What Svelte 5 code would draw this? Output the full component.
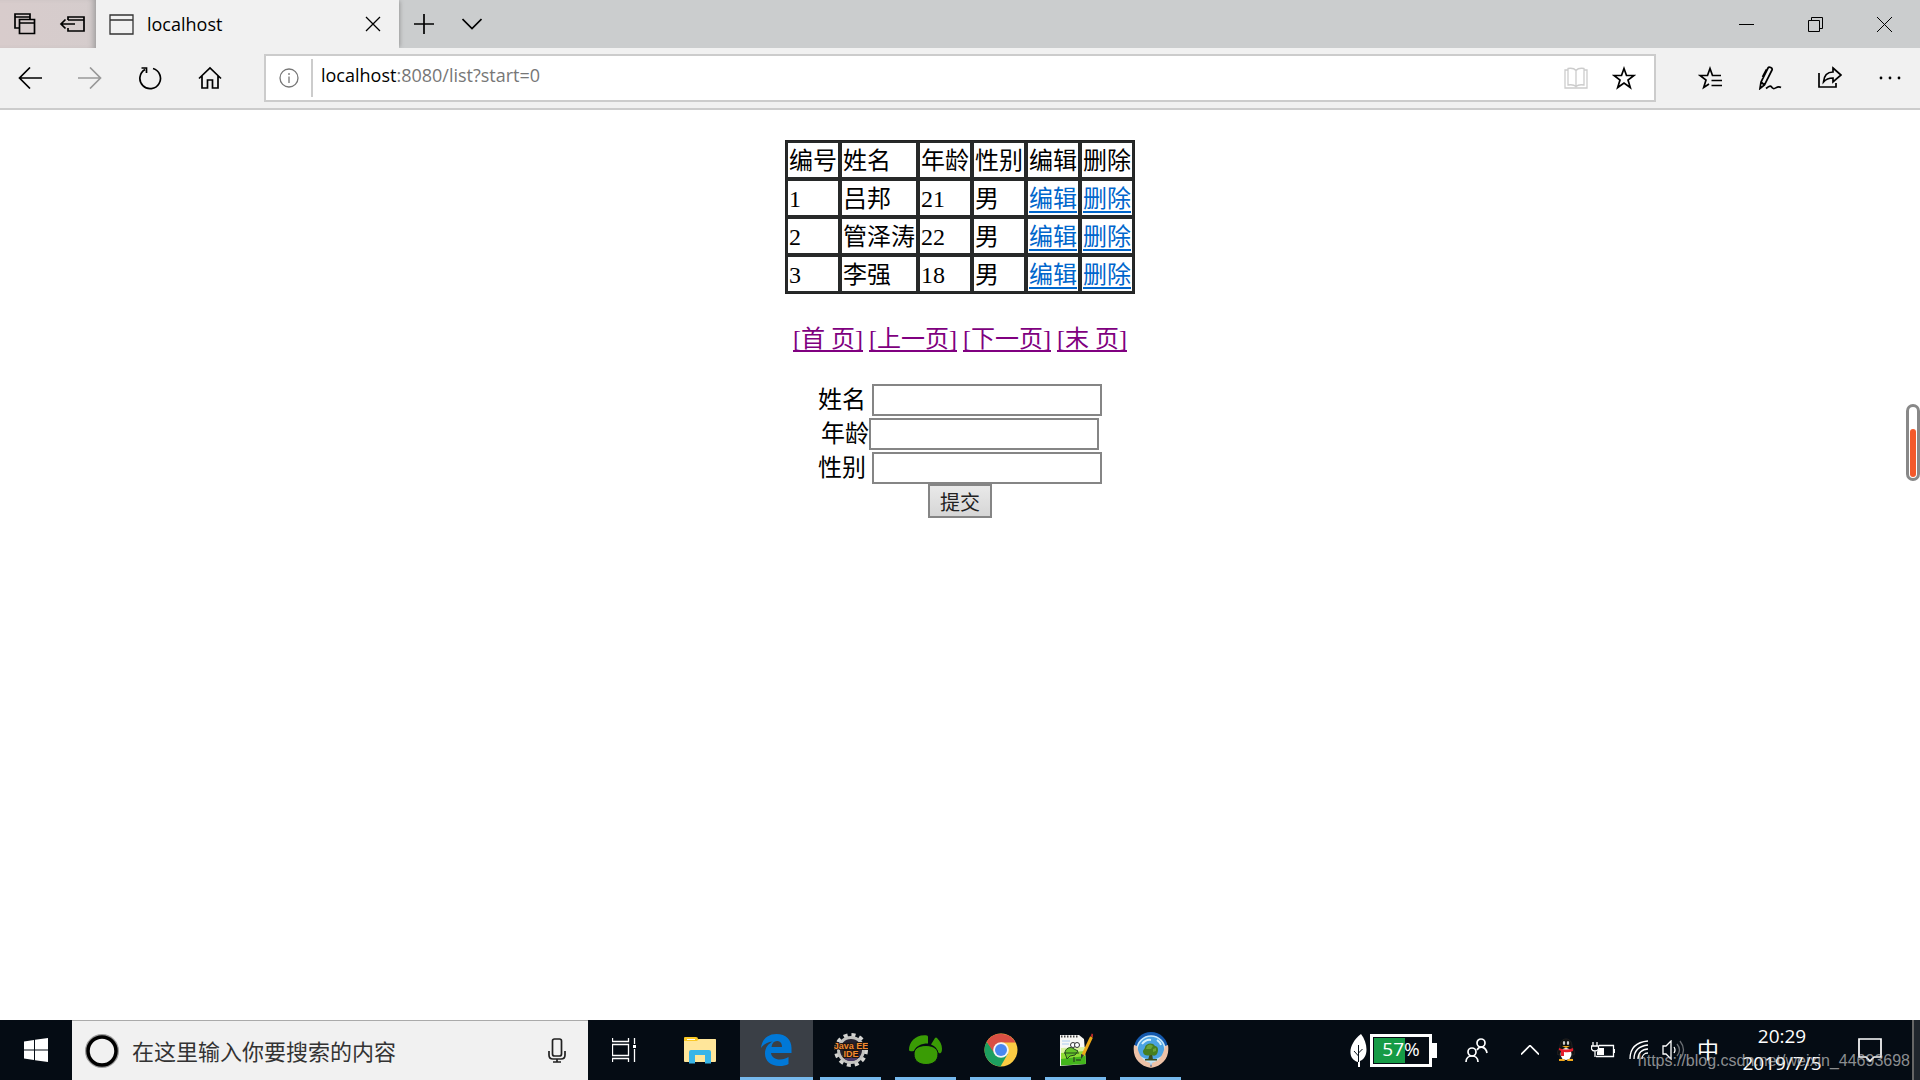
<script lang="ts">
  type Person = { id: number; name: string; age: number; sex: string }

  const people: Person[] = [
    { id: 1, name: '吕邦', age: 21, sex: '男' },
    { id: 2, name: '管泽涛', age: 22, sex: '男' },
    { id: 3, name: '李强', age: 18, sex: '男' },
  ]
  const columns = ['编号', '姓名', '年龄', '性别', '编辑', '删除']
  const pages = ['[首 页]', '[上一页]', '[下一页]', '[末 页]']

  let name = $state('')
  let age = $state('')
  let sex = $state('')
  let query = $state('')
  let battery = $state(57)
</script>

<div class="screen">
  <header>
    <div class="tabs">
      <div class="aside">
        <button type="button" aria-label="Tabs set aside">
          <svg width="24" height="24" viewBox="0 0 24 24" class="line bold" aria-hidden="true">
            <path d="M7 16H3V2h15v5M3 5h15M7.500 7.500h15v14h-15zM7.500 11h15" />
          </svg>
        </button>
        <button type="button" aria-label="Set tabs aside">
          <svg width="26" height="20" viewBox="0 0 26 20" class="line bold" aria-hidden="true">
            <path d="M9 6V3h16v14H9v-3M9 6h16M2 10h14M6.500 5.500 2 10l4.500 4.500" />
          </svg>
        </button>
      </div>
      <div class="tab">
        <svg width="25" height="21" viewBox="0 0 25 21" class="line page-icon" aria-hidden="true">
          <path d="M1 1h23v19H1zM1 6h23" />
        </svg>
        <span>localhost</span>
        <button type="button" aria-label="Close tab">
          <svg width="16" height="16" viewBox="0 0 16 16" class="line" aria-hidden="true">
            <path d="m1 1 14 14M15 1 1 15" />
          </svg>
        </button>
      </div>
      <button type="button" class="tab-action" aria-label="New tab">
        <svg width="20" height="20" viewBox="0 0 20 20" class="line bold" aria-hidden="true">
          <path d="M10 0v20M0 10h20" />
        </svg>
      </button>
      <button type="button" class="tab-action" aria-label="Tab previews">
        <svg width="20" height="12" viewBox="0 0 20 12" class="line bold" aria-hidden="true">
          <path d="m.5 1 9.500 9.500L19.500 1" />
        </svg>
      </button>
      <div class="window">
        <button type="button" aria-label="Minimize">
          <svg width="15" height="15" viewBox="0 0 15 15" class="line thin" aria-hidden="true"><path d="M0 7.500h15" /></svg>
        </button>
        <button type="button" aria-label="Restore">
          <svg width="15" height="15" viewBox="0 0 15 15" class="line thin" aria-hidden="true">
            <path d="M.5 3.500h11v11H.5zM3.500 3.500v-3h11v11h-3" />
          </svg>
        </button>
        <button type="button" aria-label="Close">
          <svg width="15" height="15" viewBox="0 0 15 15" class="line thin" aria-hidden="true"><path d="m0 0 15 15M15 0 0 15" /></svg>
        </button>
      </div>
    </div>

    <div class="toolbar">
      <nav class="tools">
        <button type="button" aria-label="Back">
          <svg width="24" height="22" viewBox="0 0 24 22" class="line bold" aria-hidden="true"><path d="M12 .5 1.500 11 12 21.500M1.500 11H24" /></svg>
        </button>
        <button type="button" aria-label="Forward" disabled>
          <svg width="24" height="22" viewBox="0 0 24 22" class="line bold" aria-hidden="true"><path d="M12 .5 22.500 11 12 21.500M22.500 11H0" /></svg>
        </button>
        <button type="button" aria-label="Refresh">
          <svg width="24" height="24" viewBox="0 0 24 24" class="line bold" aria-hidden="true">
            <path d="M15 2.500A10.300 10.300 0 1 1 7 3.500M3.500 2H8.500v5" />
          </svg>
        </button>
        <button type="button" aria-label="Home">
          <svg width="24" height="24" viewBox="0 0 24 24" class="line bold" aria-hidden="true">
            <path d="M1 12.500 12 2l11 10.500M4 10v12h5.500v-8h5v8H20V10" />
          </svg>
        </button>
      </nav>
      <div class="address">
        <svg width="20" height="20" viewBox="0 0 20 20" class="line info" aria-hidden="true">
          <circle cx="10" cy="10" r="9" /><path d="M10 8.500V15M10 5v2" />
        </svg>
        <a class="url" href="#list"><b>localhost</b>:8080/list?start=0</a>
        <button type="button" aria-label="Reading view" disabled>
          <svg width="24" height="22" viewBox="0 0 24 22" class="line pale" aria-hidden="true">
            <path d="M4 3H1v18h22V3h-3M12 3.500C10 1 7 1 4 1.500V18c3-.5 6-.5 8 1.500 2-2 5-2 8-1.500V1.500C17 1 14 1 12 3.500zM12 3.500V20" />
          </svg>
        </button>
        <button type="button" aria-label="Add to favorites">
          <svg width="24" height="24" viewBox="0 0 24 24" class="line bold" aria-hidden="true">
            <path d="m12 2.500 2.500 7h7.500l-6 4.500 2.300 7.500L12 17l-6.300 4.500L8 14 2 9.500h7.500z" />
          </svg>
        </button>
      </div>
      <div class="tools">
        <button type="button" aria-label="Hub">
          <svg width="24" height="24" viewBox="0 0 24 24" class="line bold" aria-hidden="true">
            <path d="M23 9.500h-8.500l-2.500-7-2.500 7H2L8 14l-2.300 7.500L11 18M13.500 14.500H24M13.500 19.500H24" />
          </svg>
        </button>
        <button type="button" aria-label="Add notes">
          <svg width="24" height="24" viewBox="0 0 24 24" class="line bold" aria-hidden="true">
            <path d="M2 22.500 3 16 10 2c1-2 5 0 4 2L6.500 19zM3 16l3.500 3M8.500 3.500 4.500 11M8 22.500c5-4 5-2 6.500-.5 2.500 2.500 4-3 8.500-.5" />
          </svg>
        </button>
        <button type="button" aria-label="Share">
          <svg width="24" height="24" viewBox="0 0 24 24" class="line bold" aria-hidden="true">
            <path d="M1 7v14h17v-4M15 2l8 7-8 7v-4c-5 0-7 1-9.500 4C6 10 9 6 15 6z" />
          </svg>
        </button>
        <button type="button" aria-label="More">
          <svg width="22" height="4" viewBox="0 0 22 4" aria-hidden="true">
            <circle cx="2" cy="2" r="1.400" /><circle cx="11" cy="2" r="1.400" /><circle cx="20" cy="2" r="1.400" />
          </svg>
        </button>
      </div>
    </div>
  </header>

  <main>
    <table>
      <tbody>
        <tr>
          {#each columns as column}
            <td>{column}</td>
          {/each}
        </tr>
        {#each people as person (person.id)}
          <tr>
            <td>{person.id}</td>
            <td>{person.name}</td>
            <td>{person.age}</td>
            <td>{person.sex}</td>
            <td><a href="#edit-{person.id}">编辑</a></td>
            <td><a href="#delete-{person.id}">删除</a></td>
          </tr>
        {/each}
      </tbody>
    </table>

    <nav class="pager">
      {#each pages as page, i}
        <a href="#page-{i}">{page}</a>{' '}
      {/each}
    </nav>

    <form onsubmit={(e) => e.preventDefault()}>
      <div class="field spaced"><label for="name">姓名</label><input id="name" type="text" bind:value={name} /></div>
      <div class="field"><label for="age">年龄</label><input id="age" type="text" bind:value={age} /></div>
      <div class="field spaced"><label for="sex">性别</label><input id="sex" type="text" bind:value={sex} /></div>
      <button type="submit">提交</button>
    </form>
  </main>

  <footer>
    <button type="button" class="start" aria-label="Start">
      <svg width="24" height="24" viewBox="0 0 24 24" fill="#fff" aria-hidden="true">
        <path d="M0 3.500 10 2v9.500H0zM11 1.800 24 0v11.500H11zM0 12.500h10V22L0 20.600zM11 12.500h13V24l-13-1.800z" />
      </svg>
    </button>
    <div class="search">
      <svg width="34" height="34" viewBox="0 0 34 34" fill="none" aria-hidden="true">
        <circle cx="17" cy="17" r="15.500" stroke="#999" stroke-width="3" />
        <circle cx="17" cy="17" r="14" stroke="#000" stroke-width="3.500" />
      </svg>
      <input type="text" aria-label="搜索" placeholder="在这里输入你要搜索的内容" bind:value={query} />
      <svg width="18" height="25" viewBox="0 0 18 25" class="line bold" aria-hidden="true">
        <rect x="4.500" y="1" width="9" height="17" rx="2" /><path d="M1 13v4q0 4 4 4h8q4 0 4-4v-4M9 21v3M5 24h8" />
      </svg>
    </div>

    <div class="apps">
      <button type="button" class="task-view" aria-label="Task view">
        <svg width="24" height="24" viewBox="0 0 24 24" class="line light" aria-hidden="true">
          <path d="M.5 0v3.500h16V0M.5 6.500h16v11H.5zM.5 24v-3.500h16V24M22.500 0v6M22.500 11v13" /><path d="M21 7h3v3h-3z" fill="#fff" stroke="none" />
        </svg>
      </button>
      <button type="button" class="explorer" aria-label="File Explorer">
        <svg width="32" height="27" viewBox="0 0 32 27" aria-hidden="true">
          <path fill="#fbc926" d="M0 1q0-1 1-1h11q2 0 2 2h17l1 1v6H0z" />
          <path fill="#ffe69a" d="M0 4h13l2-2h16q1 0 1 1v21q0 1-1 1H1q-1 0-1-1z" />
          <path fill="#fff" d="M3 2h8v1H3z" />
          <path fill="#39b5e8" d="M5 26.500V15q0-2 2-2h18q2 0 2 2v11.500h-6V18H11v8.500z" />
        </svg>
      </button>
      <button type="button" class="running active" aria-label="Microsoft Edge">
        <svg width="31" height="32" viewBox="0 0 31 32" fill="#0078d7" aria-hidden="true">
          <path d="M0 14C1 5 7 0 15.500 0 25 0 30.500 6 30.500 14v5H10c.5 4 4 6.500 9 6.500 3.500 0 6-1 8.500-2.500v7C25 31.500 22 32 18.500 32 9.500 32 4 27 4 19.500c0-6 3.500-10 8-12C6 8 2.500 10.500 0 14zm10.500-1H21c0-4-2-6-5-6s-5 2-5.500 6z" />
        </svg>
      </button>
      <button type="button" class="running" aria-label="Eclipse Java EE IDE">
        <svg width="34" height="34" viewBox="0 0 34 34" aria-hidden="true">
          <circle cx="17" cy="17" r="15" fill="none" stroke="#d5d5d2" stroke-width="4" stroke-dasharray="4 3.854" />
          <circle cx="17" cy="17" r="12.500" fill="#23202d" stroke="#c3c3c0" stroke-width="3" />
          <path d="M8 22h18q-3 6-9 6t-9-6z" fill="#4a3a68" />
          <text x="17" y="16" class="eclipse">Java EE</text>
          <text x="17" y="24" class="eclipse">IDE</text>
        </svg>
      </button>
      <button type="button" class="running" aria-label="Navicat">
        <svg width="33" height="30" viewBox="0 0 33 30" fill="#3a9c05" aria-hidden="true">
          <path d="M0 15C0 7 7-1 18 .5q1 0 1 1.500v6.500C12 8.500 7 11 5 16q-5 1-5-1z" />
          <path d="M22 9.500 26 3q1-1 2 0c4 4 6 9 4.500 14-1 2-3 1.500-3.500 0-1-4-3.500-6-7-7.500z" />
          <path d="M17 10.500c8 0 12 4 12 8.500 0 7-5 10.500-12 10.500S5 26 5 19c0-5 4-8.500 12-8.500z" stroke="#050c14" />
        </svg>
      </button>
      <button type="button" class="running" aria-label="Google Chrome">
        <svg width="34" height="34" viewBox="0 0 34 34" aria-hidden="true">
          <circle cx="17" cy="17" r="16.500" fill="#fbcb43" />
          <path fill="#1d9f5f" d="M2.700 8.700A16.500 16.500 0 0 0 16.500 33.500L24 20.500 17 17 9 17z" />
          <path fill="#d94f43" d="M2.700 8.700A16.500 16.500 0 0 1 31.500 9.500H17L9.500 19z" />
          <circle cx="17" cy="17" r="7.800" fill="#f5f5f5" /><circle cx="17" cy="17" r="6" fill="#4a88f0" />
        </svg>
      </button>
      <button type="button" class="running" aria-label="Notepad++">
        <svg width="34" height="34" viewBox="0 0 34 34" aria-hidden="true">
          <path fill="#f7f7f4" d="M1 2h19l5 4 2 25-26 2z" />
          <path fill="#d9f2a0" d="m2 15 24-1 .5 6L2 22z" /><path fill="#8fdb35" d="m2 20 24-2 .5 7L2 27z" /><path fill="#43b51c" d="m2 26 24.500-3 .5 8-25 1.500z" />
          <path stroke="#444" stroke-width="2" stroke-dasharray="1.500 1.500" d="M2 3.500h18" />
          <path stroke="#aaccee" d="M3 8h8M3 11h7" />
          <path fill="#67c52a" stroke="#24491c" d="M6 20c0-5 6-7 9-4l4 2-3 4-5 1-3 3zM5 20h15" />
          <circle cx="14" cy="12" r="2.500" fill="#fff" stroke="#333" /><circle cx="18" cy="12" r="2.500" fill="#fff" stroke="#333" />
          <path fill="none" stroke="#222" d="M15 24v5M17 27h5" />
          <path stroke="#eda916" stroke-width="3" d="M32.500 4 24 22" /><path stroke="#b32828" stroke-width="3" d="m34 1-1 3" /><path fill="#333" d="m22 21 3 1-3 4z" />
        </svg>
      </button>
      <button type="button" class="running" aria-label="Green browser">
        <svg width="36" height="36" viewBox="0 0 36 36" aria-hidden="true">
          <circle cx="18" cy="17" r="17" fill="#1459ad" /><circle cx="18" cy="18" r="14" fill="#4ba3e3" stroke="#c9e8fa" stroke-width="1.500" />
          <path d="M6 23q12 9 24 0-4 8-12 8T6 23z" fill="#c4e6f7" />
          <path d="M9 12q4-5 9-4M24 8q3 2 4 5" fill="none" stroke="#d8f1fb" stroke-width="2" />
          <path fill="#edc2a7" d="M1 13C-1 25 6 34 18 36l-1-5C10 29 6 24 4 14zM35 13c2 12-5 21-17 23l1-5c7-2 11-7 13-17z" />
          <path fill="#3c4d1d" d="M17 21h2l1 7h-5zM12 27h12v1.500H12z" />
          <path fill="#467e20" d="M10 20c0-3 2-3 2-5 1-4 8-5 10-1 3 0 4 4 2 8-2 3-5 1-6 1-4 1-7 1-8-3z" />
          <path fill="#6ba337" d="M14 14q3-3 6 0l-2 3h-5zM20 17l3-1v3l-3 1z" />
        </svg>
      </button>
    </div>

    <div class="tray">
      <div class="power">
        <svg width="17" height="33" viewBox="0 0 17 33" aria-hidden="true">
          <path fill="#fff" d="M11 0c7 9 8 23-1 27v6H8v-5C-3 25-2 10 11 0z" />
          <path fill="none" stroke="#07101a" d="M8.500 28V11M8.500 19l4-4M8.500 22 4 17" />
        </svg>
        <div class="battery">
          <div class="charge" style:width="{battery}%"></div>
          <span>{battery}%</span>
        </div>
      </div>
      <button type="button" class="people" aria-label="People">
        <svg width="23" height="24" viewBox="0 0 23 24" class="line light bold" aria-hidden="true">
          <circle cx="7" cy="14" r="4" /><circle cx="16" cy="5" r="4" /><path d="M1 24c0-8 12-8 12 0M12 12c3-5 9-3 10 3" />
        </svg>
      </button>
      <button type="button" aria-label="Show hidden icons">
        <svg width="18" height="10" viewBox="0 0 18 10" class="line light bold" aria-hidden="true"><path d="m0 9.500 9-9 9 9" /></svg>
      </button>
      <button type="button" aria-label="QQ">
        <svg width="18" height="24" viewBox="0 0 18 24" aria-hidden="true">
          <path fill="#111" stroke="#222" d="M9 1c4 0 6 3 6 8 3 4 3 8 2 8l-2-1v5H3v-5l-2 1c-1 0-1-4 2-8 0-5 2-8 6-8z" />
          <ellipse cx="9" cy="16" rx="5.500" ry="6" fill="#fff" /><ellipse cx="7" cy="5" rx="1.200" ry="2" fill="#ccc" /><ellipse cx="11" cy="5" rx="1.200" ry="2" fill="#ccc" />
          <path fill="#f3a91b" d="M5 8h8l-4 2zM2 21h5l1 2H2zM11 21h5v2h-6z" /><path fill="#e51d2b" d="M2 10q7 3 14 0v3q-4 2-9 1v4H4v-5l-2-1z" />
        </svg>
      </button>
      <button type="button" class="plug" aria-label="Battery">
        <svg width="24" height="18" viewBox="0 0 24 18" class="line light" aria-hidden="true">
          <path d="M8 4.500h14.500v11H5M23.500 8v4M2 1v4M6 1v4M.5 5h7v3q-1 2-3.500 2T.5 8zM4 10v6" /><path d="M8 7h5v7H6v-3z" fill="#fff" stroke="none" />
        </svg>
      </button>
      <button type="button" class="narrow" aria-label="Network">
        <svg width="20" height="20" viewBox="0 0 20 20" class="line light" aria-hidden="true">
          <path d="M1 19C1 8 8 2 19 1M5 19C5 11 10 6 19 5M9 19c0-6 4-10 10-10M13 19c0-3 2-6 6-6" />
        </svg>
      </button>
      <button type="button" class="narrow" aria-label="Volume">
        <svg width="23" height="20" viewBox="0 0 23 20" class="line light" aria-hidden="true">
          <path d="M1 6h3l5-5v18l-5-5H1zM12 7q2 3 0 6" /><path d="M15 4q5 6 0 12M18 1q7 9 0 18" opacity=".4" />
        </svg>
      </button>
      <button type="button" class="ime">中</button>
      <button type="button" class="clock"><span>20:29</span><span>2019/7/5</span></button>
      <button type="button" class="actions" aria-label="Action center">
        <svg width="24" height="24" viewBox="0 0 24 24" class="line light bold" aria-hidden="true"><path d="M1 1h22v18h-7l-4 4-4-4H1z" /></svg>
      </button>
      <button type="button" class="desktop" aria-label="Show desktop"></button>
    </div>
  </footer>

  <div class="gauge"><div></div></div>
  <p class="watermark">https://blog.csdn.net/weixin_44693698</p>
</div>

<style>
  :global(body) { margin: 0; }

  .screen {
    position: relative;
    display: flex;
    flex-direction: column;
    min-height: 100vh;
    background: #fff;
    color: #000;
    font-family: "Open Sans", "Noto Sans CJK SC", sans-serif;
  }

  button {
    display: flex;
    align-items: center;
    justify-content: center;
    padding: 0;
    border: none;
    background: none;
    color: inherit;
    font-family: inherit;
  }

  .line { fill: none; stroke: currentColor; stroke-width: 1.3; }
  .bold { stroke-width: 1.7; }
  .thin { stroke-width: 1; }
  .light { color: #fff; }
  .pale { color: #ccc; }

  .tabs {
    display: flex;
    height: 48px;
    background: linear-gradient(90deg, #d8cccc 0, #cbcdce 400px);
  }

  .aside {
    display: flex;
    width: 96px;
    box-shadow: inset -6px 0 6px -4px #999;
  }
  .aside button { width: 48px; }

  .tab {
    display: flex;
    align-items: center;
    box-sizing: border-box;
    width: 303px;
    margin-right: 1px;
    padding: 0 10px 0 13px;
    background: #f1f1f1;
    box-shadow: 2px 0 4px -1px #999;
    font-size: 18px;
  }
  .tab span { flex: 1; padding-left: 13px; }
  .tab button { width: 32px; height: 32px; }
  .page-icon { color: #333; }

  .tab-action { width: 48px; }

  .window {
    display: flex;
    margin-left: auto;
    padding-right: 1px;
  }
  .window button { width: 69px; }

  .toolbar {
    position: relative;
    display: flex;
    align-items: center;
    gap: 24px;
    height: 60px;
    background: #f1f1f1;
    border-bottom: 2px solid #ccc;
  }

  .tools { display: flex; }
  .tools button { width: 60px; height: 48px; }
  .tools button:disabled { color: #999; }

  .address {
    display: flex;
    flex: 1;
    align-items: center;
    box-sizing: border-box;
    height: 48px;
    padding: 0 6px 0 13px;
    background: #fff;
    border: 2px solid #ccc;
  }
  .address button { width: 48px; height: 40px; }
  .info { color: #777; }

  .url {
    flex: 1;
    margin-left: 12px;
    padding: 2px 0 8px 8px;
    border-left: 2px solid #ccc;
    color: #777;
    font-size: 18px;
    line-height: 28px;
    text-decoration: none;
  }
  .url b { color: #000; font-weight: 400; }

  main {
    display: flex;
    flex: 1;
    flex-direction: column;
    align-items: center;
    padding-top: 30px;
    font-family: "Liberation Serif", "Noto Sans CJK SC", serif;
    font-size: 24px;
    line-height: 32px;
  }
  main a {
    text-decoration-skip-ink: none;
    text-decoration-thickness: 2px;
    text-underline-offset: 3px;
  }

  table {
    border: 1px solid #222;
    border-spacing: 0;
  }

  td {
    padding: 2px 1px 0;
    border: 2px solid #272929;
  }
  td a { color: #0066cc; text-underline-offset: 4px; }

  .pager { margin: 29px 0; }
  .pager a { color: #800080; }

  form {
    display: flex;
    flex-direction: column;
    align-items: center;
  }

  .field {
    display: flex;
    align-items: center;
    margin-bottom: 2px;
    line-height: 28px;
  }
  .field:nth-child(3) { margin-bottom: 0; }
  .spaced { gap: 6px; }

  .field input {
    box-sizing: border-box;
    width: 230px;
    height: 32px;
    padding: 2px 4px;
    border: 2px solid #858585;
    font-size: 20px;
  }

  form button {
    width: 64px;
    height: 34px;
    border: 2px solid #858585;
    background: linear-gradient(#e9e9e9, #d6d6d6);
    color: #222;
    font-size: 20px;
  }

  footer {
    display: flex;
    height: 60px;
    background: #050c14;
    color: #fff;
  }

  .start { width: 72px; }

  .search {
    display: flex;
    align-items: center;
    box-sizing: border-box;
    width: 516px;
    padding: 0 22px 0 13px;
    background: #f1f1f1;
    border-top: 1px solid #aaa;
    color: #222;
  }
  .search input {
    flex: 1;
    min-width: 0;
    padding: 0 13px 2px;
    border: none;
    outline: none;
    background: none;
    font-family: "Noto Sans CJK SC", sans-serif;
    font-size: 22px;
  }
  .search input::placeholder { color: #333; opacity: 1; }

  .apps { display: flex; }
  .apps button { width: 75px; }
  .apps .task-view { width: 72px; }
  .apps .explorer { width: 80px; }
  .running {
    background: linear-gradient(#76b9ed, #76b9ed) center bottom / 61px 3px no-repeat;
  }
  .apps .active {
    width: 73px;
    background-color: #3a3f46;
    background-size: 100% 3px;
  }

  .eclipse {
    fill: #f28a2e;
    stroke: #1c1412;
    stroke-width: 2px;
    paint-order: stroke;
    font-family: "Liberation Sans", sans-serif;
    font-size: 9px;
    font-weight: 700;
    text-anchor: middle;
  }

  .tray {
    display: flex;
    margin-left: auto;
  }
  .tray button { width: 36px; }

  .power {
    display: flex;
    align-items: center;
    gap: 3px;
    padding-right: 26px;
  }

  .battery {
    position: relative;
    box-sizing: border-box;
    width: 62px;
    height: 33px;
    border: 3px solid #fff;
    padding: 1px;
  }
  .battery::after {
    content: '';
    position: absolute;
    top: 6px;
    right: -8px;
    width: 5px;
    height: 15px;
    background: #fff;
  }
  .battery span {
    position: absolute;
    inset: 0;
    font-size: 19px;
    line-height: 25px;
    text-align: center;
  }
  .charge { height: 100%; background: #169b46; }

  .tray .people { margin-right: 18px; }
  .tray .plug { width: 38px; }
  .tray .narrow { width: 34px; }
  .tray .ime {
    padding-bottom: 4px;
    font-size: 22px;
  }
  .tray .clock {
    flex-direction: column;
    width: 112px;
    font-size: 19px;
    line-height: 27px;
  }
  .tray .actions { width: 64px; }
  .tray .desktop {
    width: 8px;
    margin-left: 10px;
    border-left: 2px solid #666;
    background: #20262d;
  }

  .gauge {
    position: absolute;
    top: 404px;
    right: 0;
    display: flex;
    align-items: flex-end;
    box-sizing: border-box;
    width: 14px;
    height: 77px;
    padding: 1px;
    border: 3px solid #888;
    border-radius: 7px;
  }
  .gauge div {
    width: 6px;
    height: 48px;
    border-radius: 3px;
    background: #f4592b;
  }

  .watermark {
    position: absolute;
    right: 10px;
    bottom: 8px;
    margin: 0;
    color: rgba(200, 200, 200, 0.7);
    font-family: "Liberation Sans", sans-serif;
    font-size: 16px;
    line-height: 22px;
  }
</style>
